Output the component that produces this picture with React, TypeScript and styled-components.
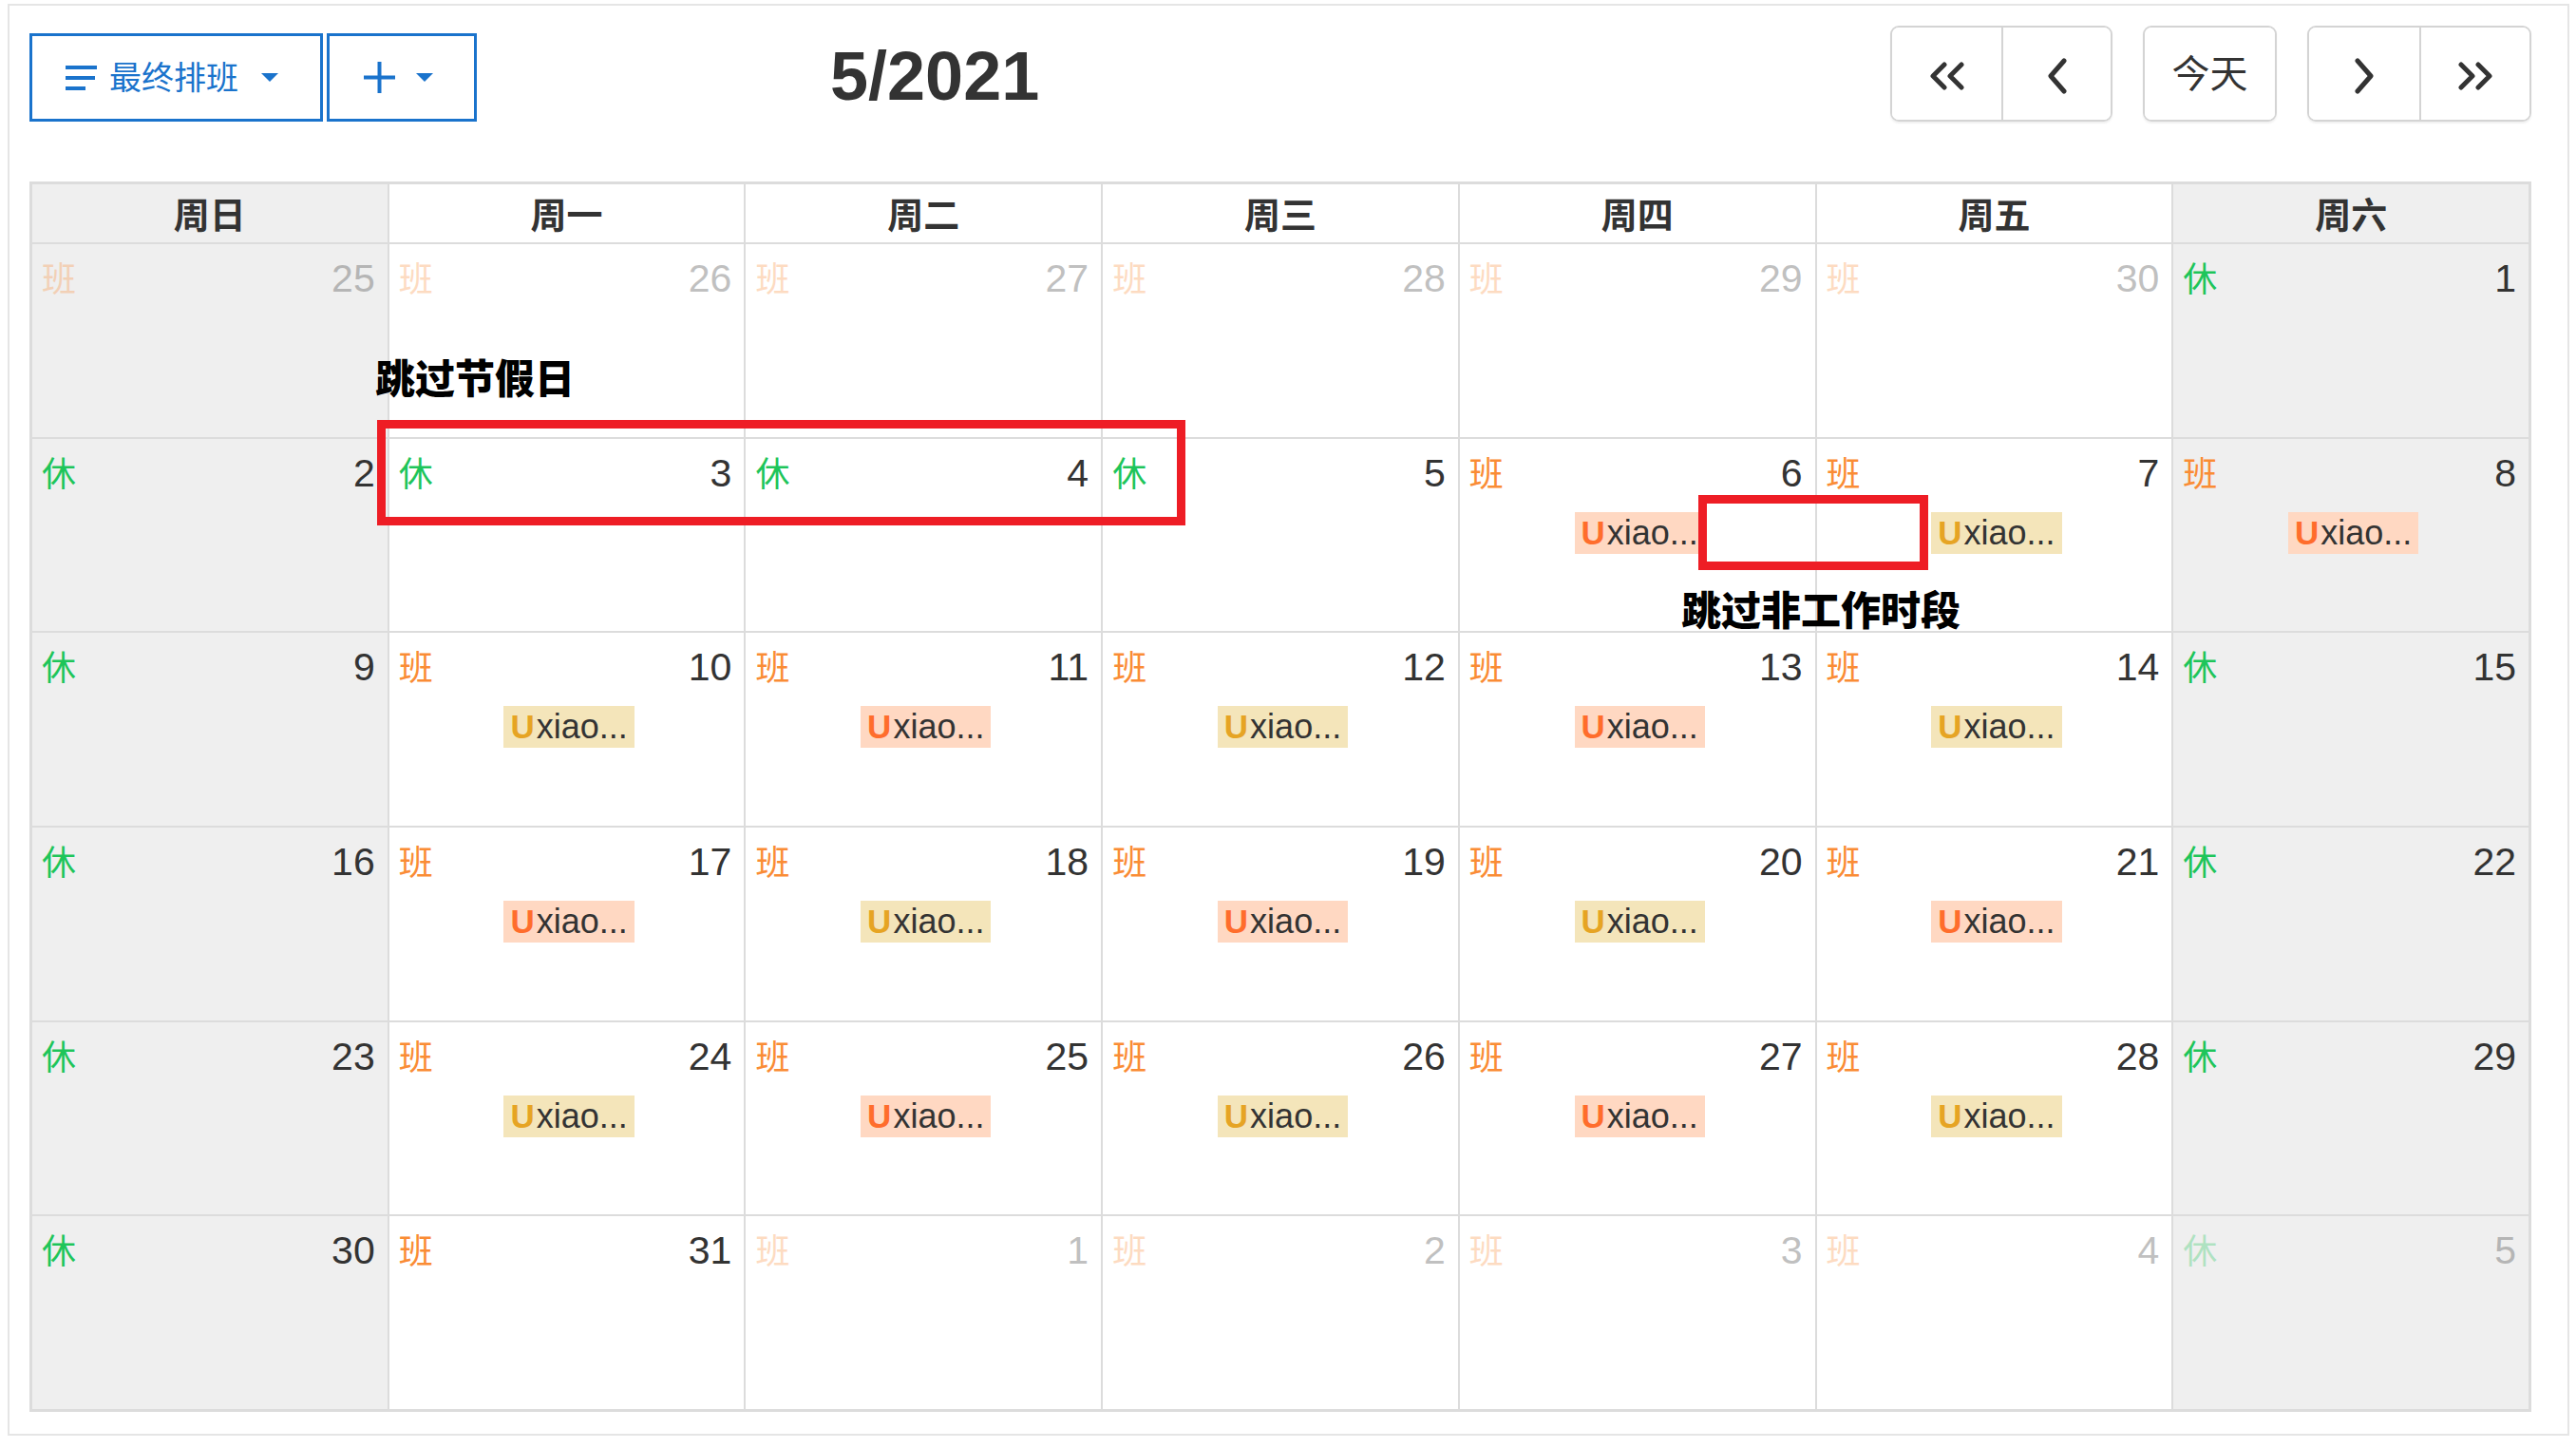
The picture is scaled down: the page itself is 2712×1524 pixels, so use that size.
import React from 'react'
import styled, { createGlobalStyle } from 'styled-components'

type Tone = 'peach' | 'yellow'
type Kind = 'work' | 'rest'

interface Day {
  key: string
  date: number
  inMonth: boolean
  kind: Kind
  weekend: boolean
  tone?: Tone
}

const WEEK = ['周日', '周一', '周二', '周三', '周四', '周五', '周六']

// 2021 May, starts on Sunday Apr 25
const buildDays = (): Day[] => {
  const days: Day[] = []
  const start = new Date(2021, 3, 25)
  const holidays = [1, 2, 3, 4, 5]
  const workWeekend = [8]
  let toneIndex = 0
  for (let i = 0; i < 42; i++) {
    const d = new Date(start)
    d.setDate(start.getDate() + i)
    const inMonth = d.getMonth() === 4
    const dow = d.getDay()
    const weekend = dow === 0 || dow === 6
    const date = d.getDate()
    let kind: Kind = weekend ? 'rest' : 'work'
    if (d.getMonth() === 3 && date === 25) kind = 'work'
    if (inMonth && holidays.includes(date)) kind = 'rest'
    if (inMonth && workWeekend.includes(date)) kind = 'work'
    let tone: Tone | undefined
    if (inMonth && kind === 'work' && date >= 6 && date <= 28) {
      tone = toneIndex % 2 === 0 ? 'peach' : 'yellow'
      toneIndex++
    }
    days.push({ key: `${d.getMonth()}-${date}`, date, inMonth, kind, weekend, tone })
  }
  return days
}

const GlobalStyle = createGlobalStyle`
  html, body {
    margin: 0;
    padding: 0;
    background: #fff;
  }
  body {
    font-family: "Liberation Sans", "Noto Sans CJK SC", sans-serif;
    color: #333;
  }
  * {
    box-sizing: border-box;
  }
`

const Frame = styled.div`
  position: relative;
  margin: 4px 0 0 8px;
  width: 2697px;
  border: 2px solid #e5e5e5;
  padding: 21px 38px 23px 21px;
`

const Toolbar = styled.div`
  display: flex;
  align-items: flex-end;
  height: 101px;
  margin-bottom: 63px;
`

const ActionGroup = styled.div`
  display: flex;
  gap: 4px;
`

const ActionButton = styled.button<{ $width: number; $padLeft: number }>`
  display: flex;
  align-items: center;
  width: ${p => p.$width}px;
  height: 93px;
  padding: 0 0 0 ${p => p.$padLeft}px;
  border: 3px solid #1a73cc;
  background: #fff;
  color: #1a73cc;
  font-family: inherit;
  font-size: 34px;
  line-height: 1;
  cursor: pointer;
`

const ActionLabel = styled.span`
  margin-left: 13px;
`

const Caret = styled.span<{ $gap: number }>`
  margin-left: ${p => p.$gap}px;
  width: 0;
  height: 0;
  border-left: 9px solid transparent;
  border-right: 9px solid transparent;
  border-top: 9px solid #1a73cc;
`

const Title = styled.h2`
  margin: 4px 0 0 372px;
  align-self: center;
  font-size: 72px;
  font-weight: 700;
  line-height: 1;
  color: #333;
`

const Nav = styled.div`
  display: flex;
  gap: 32px;
  margin-left: auto;
`

const NavGroup = styled.div`
  display: flex;
  height: 101px;
  border: 2px solid #d4d4d4;
  border-radius: 9px;
  overflow: hidden;
  box-shadow: 0 2px 2px rgba(0, 0, 0, 0.06);
`

const NavButton = styled.button<{ $width: number; $divider?: boolean }>`
  display: flex;
  align-items: center;
  justify-content: center;
  width: ${p => p.$width}px;
  padding: 4px 0 0;
  border: none;
  border-left: ${p => (p.$divider ? '2px solid #d4d4d4' : 'none')};
  background: #fff;
  color: #333;
  font-family: inherit;
  font-size: 40px;
  cursor: pointer;
`

const TodayText = styled.span`
  margin-top: -10px;
`

const Month = styled.div`
  position: relative;
`

const Grid = styled.div`
  display: grid;
  grid-template-columns: repeat(7, 1fr);
  grid-template-rows: 61px repeat(6, 1fr);
  gap: 2px;
  height: 1295px;
  border: 3px solid #dcdcdc;
  background: #dcdcdc;
`

const HeadCell = styled.div<{ $weekend: boolean }>`
  display: flex;
  align-items: center;
  justify-content: center;
  padding-bottom: 2px;
  background: ${p => (p.$weekend ? '#efefef' : '#fff')};
  font-size: 38px;
  font-weight: 700;
  color: #333;
`

const DayCell = styled.div<{ $weekend: boolean }>`
  display: flex;
  flex-direction: column;
  min-width: 0;
  padding: 12px 13px 0 10px;
  background: ${p => (p.$weekend ? '#efefef' : '#fff')};
`

const DayTop = styled.div<{ $faded: boolean }>`
  display: flex;
  justify-content: space-between;
  align-items: baseline;
  line-height: 48px;
  opacity: ${p => (p.$faded ? 0.3 : 1)};
`

const Mark = styled.span<{ $kind: Kind }>`
  font-size: 36px;
  color: ${p => (p.$kind === 'work' ? '#fa8c35' : '#1ec55a')};
`

const DayNum = styled.span`
  font-size: 41px;
  color: #333;
`

const EventRow = styled.div`
  display: flex;
  justify-content: center;
  padding-left: 8px;
  margin-top: 15px;
`

const Chip = styled.div<{ $tone: Tone }>`
  height: 44px;
  padding: 0 7px 0 7px;
  line-height: 44px;
  white-space: nowrap;
  font-size: 36px;
  color: #333;
  background: ${p => (p.$tone === 'peach' ? '#ffd8c2' : '#f4e5ba')};
`

const ChipMark = styled.span<{ $tone: Tone }>`
  margin-right: 2px;
  font-size: 35px;
  font-weight: 700;
  color: ${p => (p.$tone === 'peach' ? '#ff6d2c' : '#e6a424')};
`

const Note = styled.div<{ $left: number; $top: number }>`
  position: absolute;
  left: ${p => p.$left}px;
  top: ${p => p.$top}px;
  font-size: 42px;
  font-weight: 900;
  line-height: 1;
  color: #000;
  white-space: nowrap;
`

const Highlight = styled.div<{ $left: number; $top: number; $width: number; $height: number }>`
  position: absolute;
  left: ${p => p.$left}px;
  top: ${p => p.$top}px;
  width: ${p => p.$width}px;
  height: ${p => p.$height}px;
  border: 9px solid #ee1d25;
  pointer-events: none;
`

const MenuIcon = () => (
  <svg width="33" height="26" viewBox="0 0 33 26">
    <g stroke="#1a73cc" strokeWidth="4">
      <line x1="0" y1="2" x2="33" y2="2" />
      <line x1="0" y1="13" x2="31" y2="13" />
      <line x1="0" y1="24" x2="21" y2="24" />
    </g>
  </svg>
)

const PlusIcon = () => (
  <svg width="33" height="33" viewBox="0 0 33 33">
    <g stroke="#1a73cc" strokeWidth="4">
      <line x1="0" y1="16.5" x2="33" y2="16.5" />
      <line x1="16.5" y1="0" x2="16.5" y2="33" />
    </g>
  </svg>
)

const Chevron = ({ dir, double }: { dir: 'left' | 'right'; double?: boolean }) => {
  const flip = dir === 'right' ? 'scale(-1,1)' : undefined
  if (double) {
    return (
      <svg width="38" height="30" viewBox="0 0 38 30">
        <g
          transform={flip}
          style={{ transformOrigin: '19px 15px' }}
          fill="none"
          stroke="#333"
          strokeWidth="5"
          strokeLinecap="round"
          strokeLinejoin="round"
        >
          <polyline points="16,3 4,15 16,27" />
          <polyline points="34,3 22,15 34,27" />
        </g>
      </svg>
    )
  }
  return (
    <svg width="22" height="38" viewBox="0 0 22 38">
      <g
        transform={flip}
        style={{ transformOrigin: '11px 19px' }}
        fill="none"
        stroke="#333"
        strokeWidth="5"
        strokeLinecap="round"
        strokeLinejoin="round"
      >
        <polyline points="18,3 4,19 18,35" />
      </g>
    </svg>
  )
}

export default function App() {
  const days = buildDays()
  return (
    <>
      <GlobalStyle />
      <Frame>
        <Toolbar>
          <ActionGroup>
            <ActionButton $width={309} $padLeft={35}>
              <MenuIcon />
              <ActionLabel>最终排班</ActionLabel>
              <Caret $gap={24} />
            </ActionButton>
            <ActionButton $width={158} $padLeft={36}>
              <PlusIcon />
              <Caret $gap={22} />
            </ActionButton>
          </ActionGroup>
          <Title>5/2021</Title>
          <Nav>
            <NavGroup>
              <NavButton $width={115}>
                <Chevron dir="left" double />
              </NavButton>
              <NavButton $width={115} $divider>
                <Chevron dir="left" />
              </NavButton>
            </NavGroup>
            <NavGroup>
              <NavButton $width={137}>
                <TodayText>今天</TodayText>
              </NavButton>
            </NavGroup>
            <NavGroup>
              <NavButton $width={116}>
                <Chevron dir="right" />
              </NavButton>
              <NavButton $width={116} $divider>
                <Chevron dir="right" double />
              </NavButton>
            </NavGroup>
          </Nav>
        </Toolbar>

        <Month>
          <Grid>
            {WEEK.map((w, i) => (
              <HeadCell key={w} $weekend={i === 0 || i === 6}>
                {w}
              </HeadCell>
            ))}
            {days.map(day => (
              <DayCell key={day.key} $weekend={day.weekend}>
                <DayTop $faded={!day.inMonth}>
                  <Mark $kind={day.kind}>{day.kind === 'work' ? '班' : '休'}</Mark>
                  <DayNum>{day.date}</DayNum>
                </DayTop>
                {day.tone && (
                  <EventRow>
                    <Chip $tone={day.tone}>
                      <ChipMark $tone={day.tone}>U</ChipMark>xiao...
                    </Chip>
                  </EventRow>
                )}
              </DayCell>
            ))}
          </Grid>
          <Note $left={364} $top={188}>跳过节假日</Note>
          <Highlight $left={366} $top={251} $width={851} $height={111} />
          <Highlight $left={1757} $top={330} $width={242} $height={79} />
          <Note $left={1739} $top={432}>跳过非工作时段</Note>
        </Month>
      </Frame>
    </>
  )
}
